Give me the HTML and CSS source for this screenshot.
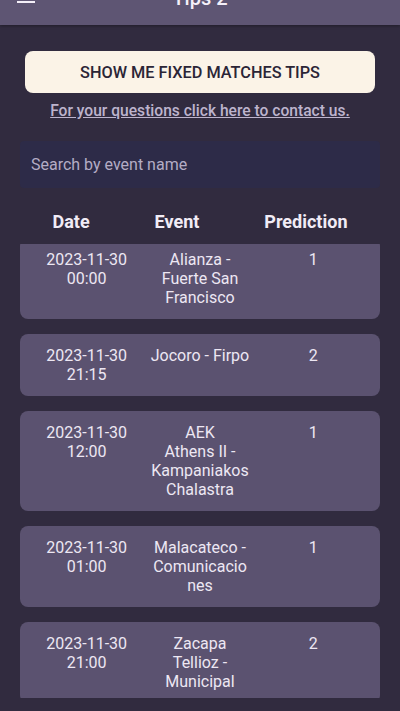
FILE: index.html
```html
<!DOCTYPE html>
<html lang="en">
<head>
    <meta charset="UTF-8">
    <meta name="viewport" content="width=device-width, initial-scale=1.0">
    <title>Tips 2</title>
    <link rel="stylesheet" href="styles.css">
</head>
<body>

<header class="app-bar">
    <div class="menu-icon">
        <span></span>
        <span></span>
        <span></span>
    </div>
    <div class="app-title">Tips 2</div>
    <div class="menu-spacer"></div>
</header>

<div class="container">
    <button class="fixed-btn">SHOW ME FIXED MATCHES TIPS</button>
    <a class="contact-link" href="#">For your questions click here to contact us.</a>

    <input type="text" class="search-input" placeholder="Search by event name">

    <div class="table-head">
        <span>Date</span>
        <span>Event</span>
        <span>Prediction</span>
    </div>

    <div class="tips-scroll">
        <div class="tips-list">
            <div class="tip-card">
                <div class="cell">2023-11-30 00:00</div>
                <div class="cell">Alianza - Fuerte San Francisco</div>
                <div class="cell">1</div>
            </div>
            <div class="tip-card">
                <div class="cell">2023-11-30 21:15</div>
                <div class="cell">Jocoro - Firpo</div>
                <div class="cell">2</div>
            </div>
            <div class="tip-card">
                <div class="cell">2023-11-30 12:00</div>
                <div class="cell">AEK<br>Athens II - Kampaniakos Chalastra</div>
                <div class="cell">1</div>
            </div>
            <div class="tip-card">
                <div class="cell">2023-11-30 01:00</div>
                <div class="cell">Malacateco - Comunicaciones</div>
                <div class="cell">1</div>
            </div>
            <div class="tip-card">
                <div class="cell">2023-11-30 21:00</div>
                <div class="cell">Zacapa Tellioz - Municipal</div>
                <div class="cell">2</div>
            </div>
        </div>
    </div>
</div>

</body>
</html>
```

FILE: styles.css
```css
body {
    font-family: Roboto, "Noto Sans", sans-serif;
    margin: 0;
    padding: 0;
    background-color: #312b3f;
    color: #ede7f3;
    height: 711px;
    overflow: hidden;
}
.app-bar {
    display: flex;
    align-items: flex-start;
    height: 25px;
    padding: 0 17px;
    background-color: #5e5573;
    box-shadow: 0 1px 3px rgba(0, 0, 0, 0.35);
    overflow: hidden;
    position: relative;
}
.menu-icon {
    width: 18px;
    height: 14px;
    margin-top: -11px;
    display: flex;
    flex-direction: column;
    justify-content: space-between;
}
.menu-icon span {
    display: block;
    height: 2px;
    background-color: #f4eff8;
}
.menu-spacer {
    width: 18px;
}
.app-title {
    flex: 1;
    text-align: center;
    font-size: 20px;
    font-weight: 500;
    line-height: 20px;
    margin-top: -12px;
    color: #f4eff8;
}
.container {
    padding: 0 20px;
}
.fixed-btn {
    display: block;
    width: 350px;
    height: 42px;
    margin: 26px auto 0;
    border: none;
    border-radius: 8px;
    background-color: #fbf3e7;
    color: #2b2536;
    font-family: inherit;
    font-size: 16.3px;
    font-weight: 500;
    cursor: pointer;
}
.contact-link {
    display: block;
    margin-top: 9px;
    text-align: center;
    font-size: 15.6px;
    font-weight: 500;
    line-height: 19px;
    color: #bdb4cd;
    text-decoration: underline;
}
.search-input {
    display: block;
    box-sizing: border-box;
    width: 100%;
    height: 47px;
    margin-top: 20px;
    padding: 0 11px;
    border: none;
    border-radius: 4px;
    background-color: #2d2b48;
    color: #ede7f3;
    font-family: inherit;
    font-size: 16px;
    outline: none;
}
.search-input::placeholder {
    color: #b4adc5;
}
.table-head {
    display: flex;
    justify-content: space-around;
    padding: 23px 0 12px;
    font-size: 18px;
    font-weight: 700;
    line-height: 21px;
    color: #f1ecf6;
}
.tips-scroll {
    height: 454px;
    overflow: hidden;
}
.tips-list {
    display: flex;
    flex-direction: column;
    gap: 15px;
    margin-top: -6px;
}
.tip-card {
    display: grid;
    grid-template-columns: 1fr 1fr 1fr;
    padding: 12px 10px;
    border-radius: 8px;
    background-color: #5b5270;
}
.cell {
    padding: 0 6px;
    text-align: center;
    font-size: 16px;
    line-height: 19px;
    overflow-wrap: anywhere;
    color: #ede7f3;
}
```
